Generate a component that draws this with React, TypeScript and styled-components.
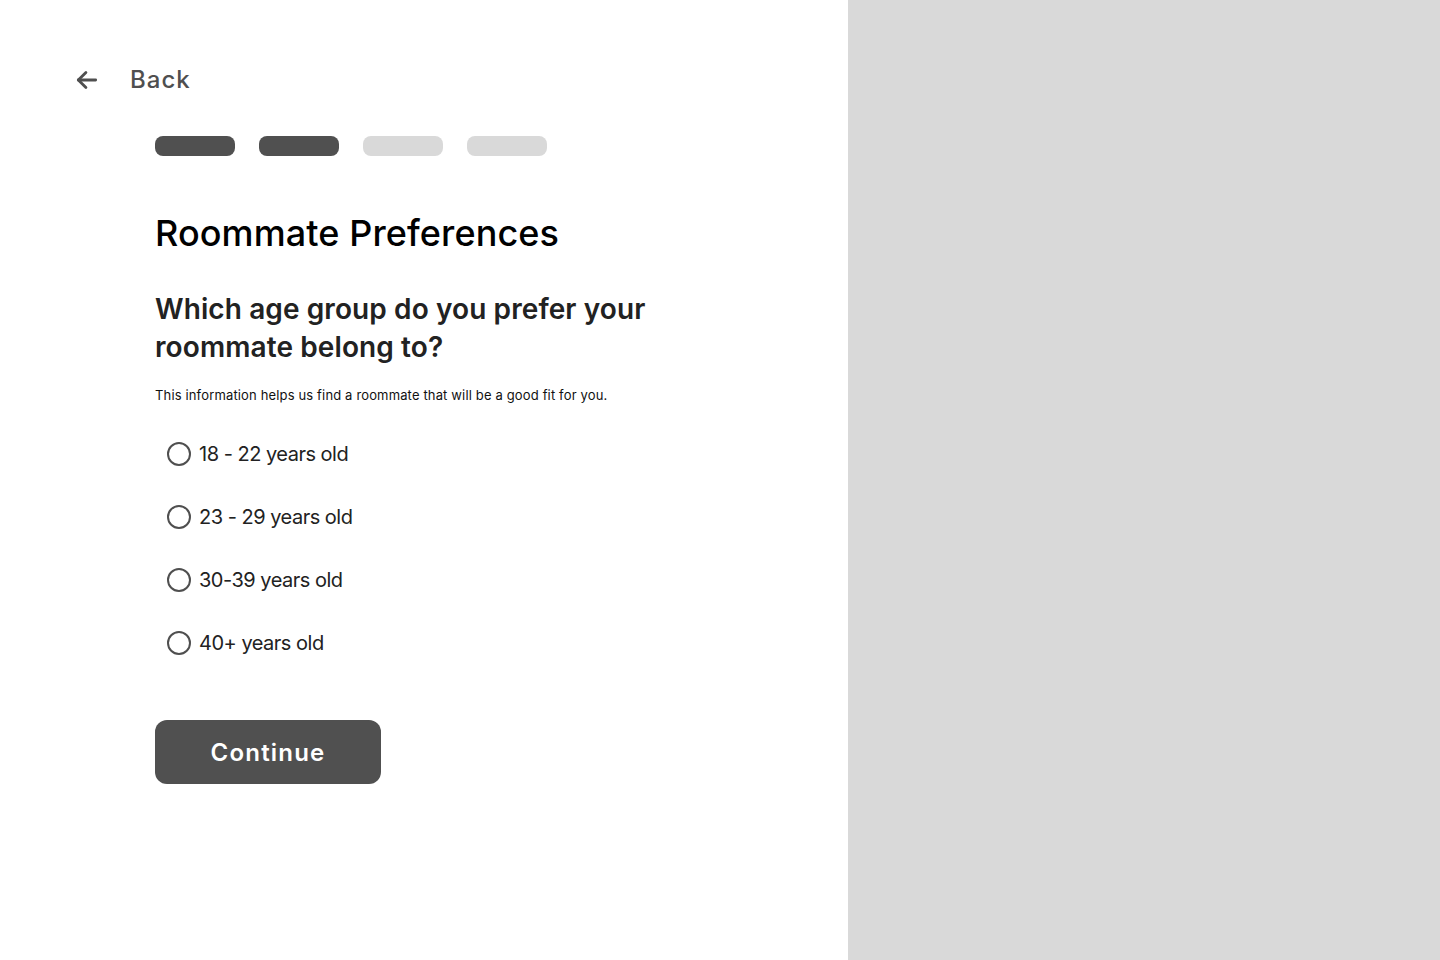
import React, { useState } from "react";
import styled, { createGlobalStyle } from "styled-components";

const GlobalStyle = createGlobalStyle`
  html, body {
    margin: 0;
    padding: 0;
  }
  body {
    font-family: "Inter", "Lato", "Liberation Sans", sans-serif;
    background: #ffffff;
  }
`;

const Page = styled.div`
  display: flex;
  width: 1440px;
  height: 960px;
  overflow: hidden;
`;

const FormPanel = styled.div`
  width: 848px;
  flex-shrink: 0;
  background: #ffffff;
  padding: 62px 0 0 0;
  box-sizing: border-box;
`;

const SidePanel = styled.div`
  flex: 1;
  background: #d9d9d9;
`;

const BackButton = styled.button`
  display: flex;
  align-items: center;
  gap: 30px;
  margin-left: 74px;
  padding: 0;
  border: none;
  background: none;
  cursor: pointer;
  color: #4f4f4f;
  font-family: inherit;
  font-size: 24px;
  font-weight: 500;
  letter-spacing: 1px;
  line-height: 36px;
`;

const Content = styled.div`
  margin-left: 155px;
  width: 560px;
`;

const Steps = styled.div`
  display: flex;
  gap: 24px;
  margin-top: 38px;
`;

const Step = styled.div<{ $done: boolean }>`
  width: 80px;
  height: 20px;
  border-radius: 8px;
  background: ${(p) => (p.$done ? "#505050" : "#d9d9d9")};
`;

const Title = styled.h1`
  margin: 53px 0 0 0;
  font-size: 36px;
  font-weight: 500;
  line-height: 48px;
  color: #000000;
  letter-spacing: 0.1px;
`;

const Question = styled.h2`
  margin: 33px 0 0 0;
  font-size: 28px;
  font-weight: 600;
  line-height: 38px;
  color: #222222;
  letter-spacing: 0.1px;
`;

const Hint = styled.p`
  margin: 20px 0 0 0;
  font-size: 13px;
  line-height: 18px;
  color: #111111;
  letter-spacing: 0.15px;
`;

const Options = styled.div`
  display: flex;
  flex-direction: column;
  gap: 31px;
  margin-top: 34px;
  margin-left: 12px;
`;

const Option = styled.label`
  display: flex;
  align-items: center;
  gap: 8px;
  height: 32px;
  font-size: 20px;
  letter-spacing: -0.5px;
  color: #222222;
  cursor: pointer;
`;

const Circle = styled.span<{ $on: boolean }>`
  width: 20px;
  height: 20px;
  border-radius: 50%;
  border: 2px solid #4f4f4f;
  box-sizing: content-box;
  display: flex;
  align-items: center;
  justify-content: center;
  &::after {
    content: "";
    width: 12px;
    height: 12px;
    border-radius: 50%;
    background: ${(p) => (p.$on ? "#4f4f4f" : "transparent")};
  }
`;

const ContinueButton = styled.button`
  margin-top: 61px;
  width: 226px;
  height: 64px;
  border: none;
  border-radius: 12px;
  background: #505050;
  color: #ffffff;
  font-family: inherit;
  font-size: 24px;
  font-weight: 600;
  letter-spacing: 1.2px;
  cursor: pointer;
`;

const ArrowLeft = () => (
  <svg width="26" height="26" viewBox="0 0 24 24" fill="none" stroke="#4f4f4f" strokeWidth="2.6" strokeLinecap="round" strokeLinejoin="round">
    <path d="M20 12H4" />
    <path d="M11 5l-7 7 7 7" />
  </svg>
);

const options = ["18 - 22 years old", "23 - 29 years old", "30-39 years old", "40+ years old"];

export default function App() {
  const [selected, setSelected] = useState<number | null>(null);
  return (
    <>
      <GlobalStyle />
      <Page>
        <FormPanel>
          <BackButton>
            <ArrowLeft />
            Back
          </BackButton>
          <Content>
            <Steps>
              <Step $done />
              <Step $done />
              <Step $done={false} />
              <Step $done={false} />
            </Steps>
            <Title>Roommate Preferences</Title>
            <Question>
              Which age group do you prefer your
              <br />
              roommate belong to?
            </Question>
            <Hint>This information helps us find a roommate that will be a good fit for you.</Hint>
            <Options>
              {options.map((o, i) => (
                <Option key={o} onClick={() => setSelected(i)}>
                  <Circle $on={selected === i} />
                  {o}
                </Option>
              ))}
            </Options>
            <ContinueButton>Continue</ContinueButton>
          </Content>
        </FormPanel>
        <SidePanel />
      </Page>
    </>
  );
}
